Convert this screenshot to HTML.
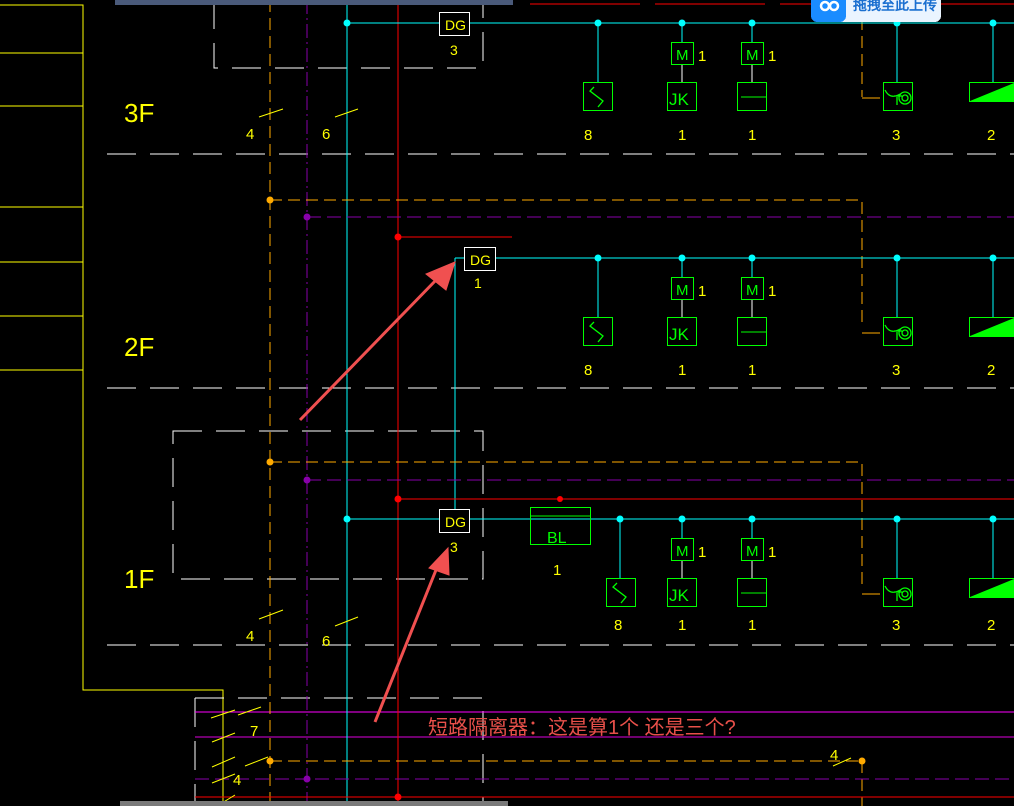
<!DOCTYPE html>
<html><head><meta charset="utf-8"><style>
html,body{margin:0;padding:0;background:#000;width:1014px;height:806px;overflow:hidden}
svg{display:block}
text{font-family:"Liberation Sans",sans-serif}
line,path,rect{shape-rendering:crispEdges}
.aa{shape-rendering:auto}
</style></head><body>
<svg width="1014" height="806" viewBox="0 0 1014 806" xmlns="http://www.w3.org/2000/svg">
<defs>
<g id="row">
 <line x1="598" y1="0" x2="598" y2="59" stroke="#0ff"/>
 <line x1="682" y1="0" x2="682" y2="19" stroke="#0ff"/>
 <line x1="752" y1="0" x2="752" y2="19" stroke="#0ff"/>
 <line x1="682" y1="41" x2="682" y2="59" stroke="#fff"/>
 <line x1="752" y1="41" x2="752" y2="59" stroke="#fff"/>
 <line x1="897" y1="0" x2="897" y2="59" stroke="#0ff"/>
 <line x1="993" y1="0" x2="993" y2="59" stroke="#0ff"/>
 <g fill="#0ff"><circle cx="598" cy="0" r="3.5"/><circle cx="682" cy="0" r="3.5"/><circle cx="752" cy="0" r="3.5"/><circle cx="897" cy="0" r="3.5"/><circle cx="993" cy="0" r="3.5"/></g>
 <g fill="none" stroke="#0f0" stroke-width="1.3">
  <rect x="583.5" y="59.5" width="29" height="28"/>
  <path class="aa" d="M594 64 L590 68 L603 78 L598 84"/>
  <rect x="667.5" y="59.5" width="29" height="28"/>
  <rect x="671.5" y="19.5" width="22" height="22"/>
  <rect x="741.5" y="19.5" width="22" height="22"/>
  <rect x="737.5" y="59.5" width="29" height="28"/>
  <path d="M741 74 H766"/>
  <rect x="883.5" y="59.5" width="29" height="28"/>
  <path class="aa" d="M885 67 Q890 77 900 71 M897 74 V82 M894 73 H902"/><circle cx="905" cy="75" r="6"/><circle cx="905" cy="75" r="3"/>
  <rect x="969.5" y="59.5" width="50" height="19"/>
 </g>
 <path class="aa" d="M970 78 L1014 60 L1014 78 Z" fill="#0f0"/>
 <g fill="#0f0" font-size="15"><text x="676" y="37">M</text><text x="746" y="37">M</text><text x="669" y="82" font-size="17">JK</text></g>
 <g fill="#ff0" font-size="15"><text x="698" y="38">1</text><text x="768" y="38">1</text>
 <text x="584" y="117">8</text><text x="678" y="117">1</text><text x="748" y="117">1</text><text x="892" y="117">3</text><text x="987" y="117">2</text></g>
 <path d="M862 75 H880" stroke="#fa0"/>
</g>
</defs>

<g stroke="#ff0" fill="none" stroke-width="1.2">
 <path d="M0 5 H83 V690 H223 V806"/>
 <path d="M0 53 H83 M0 106 H83 M0 207 H83 M0 262 H83 M0 316 H83 M0 370 H83"/>
</g>
<g stroke="#fff" stroke-width="1.2" stroke-dasharray="29,14">
 <line x1="107" y1="154" x2="1014" y2="154"/>
 <line x1="107" y1="388" x2="1014" y2="388"/>
 <line x1="107" y1="645" x2="1014" y2="645"/>
</g>
<g stroke="#fff" stroke-width="1.2" fill="none" stroke-dasharray="29,14">
 <path d="M214 0 V68 H483 V0"/>
 <path d="M173 431 H483 V579 H173 Z"/>
 <path d="M195 698 H483 V806 M195 698 V806"/>
</g>
<line x1="195" y1="712" x2="1014" y2="712" stroke="#f0f" stroke-width="1.2"/>
<line x1="195" y1="737" x2="1014" y2="737" stroke="#d0d" stroke-width="1"/>
<line x1="270" y1="0" x2="270" y2="806" stroke="#fa0" stroke-dasharray="12,6"/>
<line x1="307" y1="0" x2="307" y2="806" stroke="#80a" stroke-width="1.3" stroke-dasharray="14,4,2,4"/>
<line x1="347" y1="0" x2="347" y2="806" stroke="#0ff"/>
<line x1="398" y1="0" x2="398" y2="806" stroke="#f00" stroke-width="1.2"/>
<line x1="455" y1="258" x2="455" y2="510" stroke="#0ff"/>
<g stroke="#fa0" stroke-dasharray="12,6" fill="none">
 <path d="M270 200 H862 V325"/>
 <path d="M270 462 H862 V590"/>
 <path d="M270 761 H862"/>
 <path d="M862 0 V97"/>
 <path d="M862 761 V806"/>
</g>
<g stroke="#80a" stroke-dasharray="14,6">
 <line x1="307" y1="217" x2="1014" y2="217"/>
 <line x1="307" y1="480" x2="1014" y2="480"/>
 <line x1="195" y1="779" x2="1014" y2="779"/>
</g>
<g stroke="#f00" stroke-width="1.2">
 <line x1="398" y1="237" x2="512" y2="237"/>
 <line x1="398" y1="499" x2="1014" y2="499"/>
 <line x1="195" y1="797" x2="1014" y2="797"/>
 <line x1="530" y1="4" x2="1014" y2="4" stroke-dasharray="110,15"/>
</g>
<g stroke="#0ff">
 <line x1="347" y1="23" x2="1014" y2="23"/>
 <line x1="455" y1="258" x2="1014" y2="258"/>
 <line x1="347" y1="519" x2="1014" y2="519"/>
</g>
<g>
 <circle cx="347" cy="23" r="3.5" fill="#0ff"/><circle cx="347" cy="519" r="3.5" fill="#0ff"/>
 <circle cx="270" cy="200" r="3.5" fill="#fa0"/><circle cx="270" cy="462" r="3.5" fill="#fa0"/><circle cx="270" cy="761" r="3.5" fill="#fa0"/><circle cx="862" cy="761" r="3.5" fill="#fa0"/>
 <circle cx="307" cy="217" r="3.5" fill="#80a"/><circle cx="307" cy="480" r="3.5" fill="#80a"/><circle cx="307" cy="779" r="3.5" fill="#80a"/>
 <circle cx="398" cy="237" r="3.5" fill="#f00"/><circle cx="398" cy="499" r="3.5" fill="#f00"/><circle cx="398" cy="797" r="3.5" fill="#f00"/><circle cx="560" cy="499" r="3" fill="#f00"/>
</g>
<use href="#row" transform="translate(0,23)"/>
<use href="#row" transform="translate(0,258)"/>
<g transform="translate(0,519)">
 <line x1="620" y1="0" x2="620" y2="59" stroke="#0ff"/>
 <line x1="682" y1="0" x2="682" y2="19" stroke="#0ff"/>
 <line x1="752" y1="0" x2="752" y2="19" stroke="#0ff"/>
 <line x1="682" y1="41" x2="682" y2="59" stroke="#fff"/>
 <line x1="752" y1="41" x2="752" y2="59" stroke="#fff"/>
 <line x1="897" y1="0" x2="897" y2="59" stroke="#0ff"/>
 <line x1="993" y1="0" x2="993" y2="59" stroke="#0ff"/>
 <g fill="#0ff"><circle cx="620" cy="0" r="3.5"/><circle cx="682" cy="0" r="3.5"/><circle cx="752" cy="0" r="3.5"/><circle cx="897" cy="0" r="3.5"/><circle cx="993" cy="0" r="3.5"/></g>
 <g fill="none" stroke="#0f0" stroke-width="1.3">
  <rect x="606.5" y="59.5" width="29" height="28"/>
  <path class="aa" d="M617 64 L613 68 L626 78 L621 84"/>
  <rect x="667.5" y="59.5" width="29" height="28"/>
  <rect x="671.5" y="19.5" width="22" height="22"/>
  <rect x="741.5" y="19.5" width="22" height="22"/>
  <rect x="737.5" y="59.5" width="29" height="28"/>
  <path d="M741 74 H766"/>
  <rect x="883.5" y="59.5" width="29" height="28"/>
  <path class="aa" d="M885 67 Q890 77 900 71 M897 74 V82 M894 73 H902"/><circle cx="905" cy="75" r="6"/><circle cx="905" cy="75" r="3"/>
  <rect x="969.5" y="59.5" width="50" height="19"/>
  <rect x="530.5" y="-11.5" width="60" height="37"/>
  <path d="M530 -3 H590"/>
 </g>
 <path class="aa" d="M970 78 L1014 60 L1014 78 Z" fill="#0f0"/>
 <g fill="#0f0" font-size="15"><text x="676" y="37">M</text><text x="746" y="37">M</text><text x="669" y="82" font-size="17">JK</text><text x="547" y="24" font-size="16">BL</text></g>
 <g fill="#ff0" font-size="15"><text x="698" y="38">1</text><text x="768" y="38">1</text><text x="553" y="56">1</text>
 <text x="614" y="111">8</text><text x="678" y="111">1</text><text x="748" y="111">1</text><text x="892" y="111">3</text><text x="987" y="111">2</text></g>
 <path d="M862 75 H880" stroke="#fa0"/>
</g>
<g fill="#000" stroke="#fff" stroke-width="1.2">
 <rect x="439.5" y="12.5" width="30" height="23"/>
 <rect x="464.5" y="247.5" width="31" height="23"/>
 <rect x="439.5" y="509.5" width="30" height="23"/>
</g>
<g fill="#ff0" font-size="14">
 <text x="445" y="30">DG</text><text x="470" y="265">DG</text><text x="445" y="527">DG</text>
 <text x="450" y="55">3</text><text x="474" y="288">1</text><text x="450" y="552">3</text>
</g>
<g fill="#ff0" font-size="26">
 <text x="124" y="122">3F</text><text x="124" y="356">2F</text><text x="124" y="588">1F</text>
</g>
<g fill="#ff0" font-size="15">
 <text x="246" y="139">4</text><text x="322" y="139">6</text>
 <text x="246" y="641">4</text><text x="322" y="646">6</text>
 <text x="250" y="736">7</text><text x="233" y="785">4</text><text x="830" y="760">4</text>
</g>
<g stroke="#ff0" class="aa">
 <path class="aa" d="M259 117 L283 109 M335 117 L358 109 M259 619 L283 610 M335 626 L358 617"/>
 <path class="aa" d="M211 718 L235 710 M238 715 L261 707 M212 742 L235 733 M212 767 L235 757 M245 766 L268 757 M212 783 L235 774 M217 806 L235 795 M833 766 L851 758"/>
</g>
<g fill="#f05050" stroke="#f05050">
 <path class="aa" d="M300 420 L438 278" stroke-width="3" fill="none"/>
 <path class="aa" d="M455 262 L426 274 L446 290 Z"/>
 <path class="aa" d="M375 722 L440 560" stroke-width="3" fill="none"/>
 <path class="aa" d="M448 548 L429 568 L449 575 Z"/>
</g>
<text x="428" y="734" fill="#e8504a" font-size="20" font-family="Liberation Sans, Noto Sans CJK SC, sans-serif">短路隔离器：这是算1个 还是三个?</text>
<rect x="115" y="0" width="398" height="5" fill="#4a5a7a"/>
<rect x="120" y="801" width="388" height="5" fill="#7a7a7a"/>
<rect x="811" y="-6" width="130" height="28" rx="6" fill="#eaf4ff"/>
<rect x="811" y="-6" width="35" height="28" rx="6" fill="#1a8cff"/>
<circle cx="825" cy="6" r="4" fill="none" stroke="#fff" stroke-width="2.5"/><circle cx="834" cy="6" r="4" fill="none" stroke="#fff" stroke-width="2.5"/>
<text x="853" y="10" fill="#1a6fd0" font-size="14" font-weight="bold" font-family="Liberation Sans, Noto Sans CJK SC, sans-serif">拖拽至此上传</text>
</svg>
</body></html>
